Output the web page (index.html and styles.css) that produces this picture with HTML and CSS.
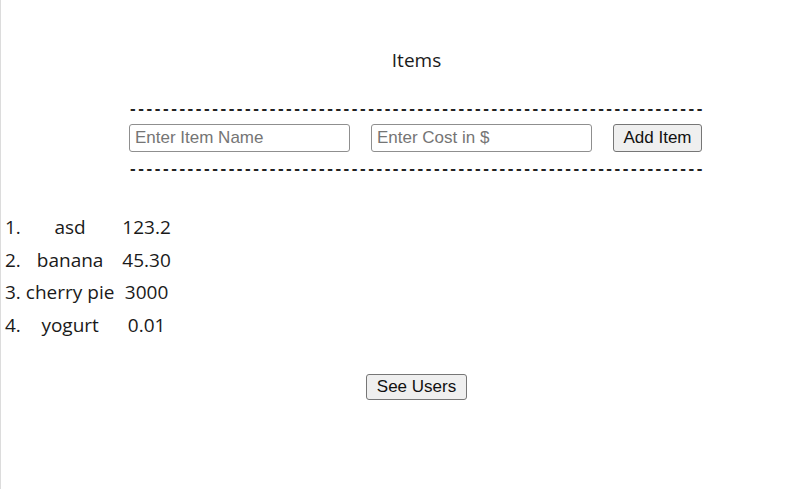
FILE: index.html
```html
<!DOCTYPE html>
<html>
<head>
<meta charset='UTF-8'>
<link rel="stylesheet" href="styles.css">
</head>
<body>
<div class='page'>
<div class='center'>
<h1 class='title'>Items</h1>
<div class='dashes'>----------------------------------------------------------------------</div>
<form class='add-form' onsubmit='return false'>
<input class='field' type='text' placeholder='Enter Item Name'>
<input class='field' type='text' placeholder='Enter Cost in $'>
<button class='btn' type='submit'>Add Item</button>
</form>
<div class='dashes'>----------------------------------------------------------------------</div>
</div>
<div class='items'>
<span class='num'>1.</span><span class='name'>asd</span><span class='cost'>123.2</span>
<span class='num'>2.</span><span class='name'>banana</span><span class='cost'>45.30</span>
<span class='num'>3.</span><span class='name'>cherry pie</span><span class='cost'>3000</span>
<span class='num'>4.</span><span class='name'>yogurt</span><span class='cost'>0.01</span>
</div>
<div class='center'>
<button class='btn' type='button'>See Users</button>
</div>
</div>
</body>
</html>
```

FILE: styles.css
```css
* {
    margin: 0;
    padding: 0;
    box-sizing: border-box;
}

body {
    background: #fff;
    color: #1a1a1a;
    font-family: "Open Sans", "Noto Sans", sans-serif;
    height: 489px;
    border-left: 1px solid #dcdcdc;
}

.page {
    display: flex;
    flex-direction: column;
}

.center {
    display: flex;
    flex-direction: column;
    align-items: center;
    padding-left: 26px;
}

.title {
    font-size: 19px;
    font-weight: normal;
    margin-top: 47px;
    line-height: 26px;
}

/* row of hyphens above and below the form */
.dashes {
    font-family: "Liberation Sans", Arial, sans-serif;
    font-size: 17px;
    letter-spacing: 2.55px;
    line-height: 16px;
    color: #222;
    font-weight: bold;
    margin-top: 28px;
    margin-left: 2px;
    white-space: nowrap;
}

.add-form + .dashes {
    margin-top: 9px;
}

.add-form {
    display: flex;
    gap: 21px;
    margin-top: 7px;
    align-items: center;
    margin-left: -2px;
}

.field {
    width: 221px;
    height: 28px;
    border: 1px solid #8f8f8f;
    border-radius: 3px;
    padding: 0 5px;
    font-family: "Liberation Sans", Arial, sans-serif;
    font-size: 17px;
    color: #222;
}

.field::placeholder {
    color: #757575;
}

.btn {
    height: 28px;
    padding: 0 9.5px;
    border: 1px solid #767676;
    border-radius: 3px;
    background: #efefef;
    font-family: "Liberation Sans", Arial, sans-serif;
    font-size: 17px;
    color: #111;
}

.items {
    display: grid;
    grid-template-columns: auto auto auto;
    justify-content: start;
    column-gap: 5px;
    margin-top: 34px;
    margin-left: 4px;
    font-size: 19px;
    line-height: 32.6px;
}

.name, .cost {
    text-align: center;
}

.cost {
    padding-left: 3px;
}

.items + .center {
    margin-top: 33px;
}

.items + .center .btn {
    height: 26px;
    padding: 0 10px;
}
```
